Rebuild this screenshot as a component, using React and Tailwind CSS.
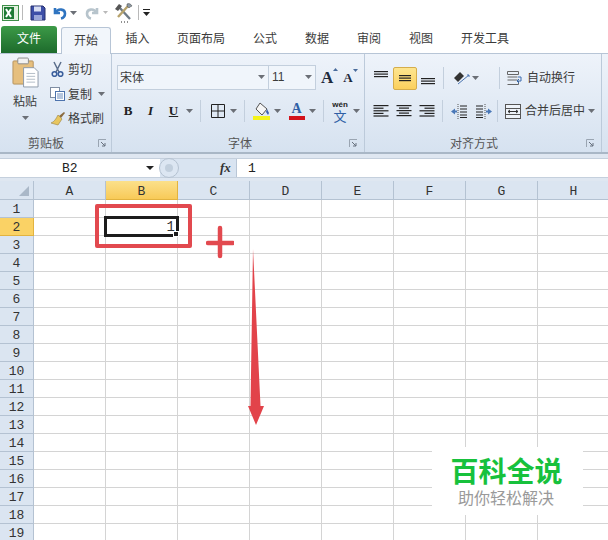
const cjk = { fontFamily: '"Noto Sans CJK SC", "Liberation Sans", sans-serif' };
const cols = ["A", "B", "C", "D", "E", "F", "G", "H"];
const rows = Array.from({ length: 19 }, (_, i) => i + 1);
const tabs = [
  ["插入", "w-[53px]"],
  ["页面布局", "w-[74px]"],
  ["公式", "w-[54px]"],
  ["数据", "w-[50px]"],
  ["审阅", "w-[54px]"],
  ["视图", "w-[50px]"],
  ["开发工具", "w-[78px]"],
];

function Caret({ className = "" }) {
  return (
    <svg width="7" height="4" viewBox="0 0 7 4" className={className}>
      <path d="M0 0h7L3.5 4z" fill="#6b6f76" />
    </svg>
  );
}

function Sep({ className = "" }) {
  return <div className={`w-px h-[22px] bg-[#c3cfdd] shrink-0 ${className}`} />;
}

function Launcher() {
  return (
    <svg width="9" height="9" viewBox="0 0 9 9">
      <path d="M.5 8V.5H8" fill="none" stroke="#9aa5b2" />
      <path d="M3 3l4 4M7 4v3H4" fill="none" stroke="#67717e" />
    </svg>
  );
}

function Lines({ widths, top = 0 }) {
  return (
    <svg width="16" height="14" viewBox="0 0 16 14">
      {widths.map((w, i) => (
        <rect key={i} x={(16 - w) / 2} y={top + i * 2.5} width={w} height="1.2" fill="#222" />
      ))}
    </svg>
  );
}

function LeftLines({ right }) {
  const w = [15, 10, 15, 10, 15];
  return (
    <svg width="16" height="14" viewBox="0 0 16 14">
      {w.map((v, i) => (
        <rect key={i} x={right ? 15.5 - v : 0.5} y={1 + i * 2.6} width={v} height="1.2" fill="#222" />
      ))}
    </svg>
  );
}

function Indent({ flip }) {
  return (
    <svg width="16" height="15" viewBox="0 0 16 15" style={flip ? { transform: "scaleX(-1)" } : undefined}>
      <path d="M7 0v15" stroke="#555" strokeDasharray="1 1" />
      <path d="M9 2h7M9 5h7M9 8h7M9 11h7M9 13.5h7" stroke="#222" />
      <path d="M0 7.5l4-3v2h2v2H4v2z" fill="#4a78b8" />
    </svg>
  );
}

export default function App() {
  return (
    <div className="w-[608px] h-[540px] overflow-hidden relative bg-white text-[#3b3b3b]" style={cjk}>
      {/* quick access */}
      <div className="h-[25px] flex items-center pl-[1px] bg-white">
        <svg width="20" height="20" viewBox="0 0 20 20">
          <rect x="1.5" y="2.5" width="16" height="15" fill="#e3f0df" stroke="#3f8f49" />
          <rect x="3" y="4" width="10" height="12" fill="#1f7a35" />
          <path d="M5 6l5 8M10 6l-5 8" stroke="#fff" strokeWidth="2" />
        </svg>
        <div className="w-px h-[15px] bg-[#b9b9b9] ml-[1px]" />
        <svg width="16" height="16" viewBox="0 0 16 16" className="ml-[7px]">
          <path d="M1 1h12l2 2v12H1z" fill="#3d4fa8" stroke="#27306f" />
          <rect x="4" y="1.5" width="7" height="5" fill="#d8def2" />
          <rect x="4" y="10" width="8" height="5" fill="#9aa6d8" />
        </svg>
        <svg width="14" height="15" viewBox="0 0 14 15" className="ml-[7px]">
          <path d="M2 3v5h5M3 7.5C5 3 12 4 12 8.500c0 2.500-2 4.500-4 5" fill="none" stroke="#2f74c0" strokeWidth="2.600" />
        </svg>
        <Caret className="ml-[3px]" />
        <svg width="14" height="15" viewBox="0 0 14 15" className="ml-[8px]">
          <path d="M12 3v5H7M11 7.500C9 3 2 4 2 8.500c0 2.500 2 4.500 4 5" fill="none" stroke="#b7c4cc" strokeWidth="2.600" />
        </svg>
        <svg width="5" height="3" viewBox="0 0 7 4" className="ml-[4px]">
          <path d="M0 0h7L3.500 4z" fill="#b9b9b9" />
        </svg>
        <svg width="20" height="20" viewBox="0 0 20 20" className="ml-[6px]">
          <path d="M5 4l11 12" stroke="#6f7b86" strokeWidth="2.400" />
          <path d="M14 3L4 14" stroke="#b7a36c" strokeWidth="2.400" />
          <path d="M1 6l4-5 3 2-4 5z" fill="#555" />
          <path d="M13 1c2-1 4 0 5 2l-2 1-1 1-2-2z" fill="#8e9aa5" stroke="#444" strokeWidth=".5" />
          <path d="M7 19h1M10 19h1M13 19h1" stroke="#222" />
        </svg>
        <div className="w-px h-[15px] bg-[#b9b9b9] ml-[4px]" />
        <svg width="7" height="7" viewBox="0 0 7 7" className="ml-[4px]">
          <path d="M0 0h7v1H0z" fill="#222" />
          <path d="M0 3h7L3.500 7z" fill="#222" />
        </svg>
      </div>

      {/* tabs */}
      <div className="h-[28px] flex items-end text-[12px] relative z-10">
        <div className="w-[56px] h-[27px] pb-[3px] ml-[1px] rounded-t-[3px] bg-gradient-to-b from-[#3c9a47] to-[#1d6b2c] text-white flex items-center justify-center">
          文件
        </div>
        <div className="w-[50px] h-[27px] pb-[3px] ml-[4px] -mb-px bg-[#f2f6fb] border border-b-0 border-[#b7c5d6] rounded-t-[3px] flex items-center justify-center">
          开始
        </div>
        {tabs.map(([t, w]) => (
          <div key={t} className={`${w} h-[27px] pb-[3px] shrink-0 flex items-center justify-center`}>
            {t}
          </div>
        ))}
      </div>

      {/* ribbon */}
      <div className="h-[101px] flex bg-gradient-to-b from-[#eef3fa] to-[#d6e2f0] border-t border-b-2 border-t-[#b7c5d6] border-b-[#a9b7c6] text-[12px]">
        {/* clipboard */}
        <div className="w-[112px] shrink-0 border-r border-[#bccada] flex flex-col">
          <div className="h-[81px] flex">
            <div className="w-[48px] flex flex-col items-center pt-[3px] pl-[2px] shrink-0">
              <svg width="27" height="31" viewBox="0 0 28 32">
                <rect x="1" y="4" width="21" height="24" rx="1" fill="#e6bf7e" stroke="#b4925c" />
                <rect x="6" y="1" width="11" height="6" rx="1" fill="#f2f2f2" stroke="#8a8a8a" />
                <path d="M12 11h11l4 4v16H12z" fill="#fff" stroke="#8d99a8" />
                <path d="M15 17h9M15 20h9M15 23h9M15 26h9" stroke="#b3bcc7" />
              </svg>
              <div className="mt-[4px] leading-[18px]">粘贴</div>
              <Caret className="mt-[6px]" />
            </div>
            <div className="flex flex-col pt-[2px] pl-[2px]">
              <div className="h-[25px] flex items-center gap-[3px]">
                <svg width="15" height="16" viewBox="0 0 15 16">
                  <path d="M4 1l5 10M11 1L6 11" stroke="#5b6e8c" strokeWidth="1.500" />
                  <circle cx="4.500" cy="13" r="2.300" fill="none" stroke="#3a5e9c" strokeWidth="1.600" />
                  <circle cx="10.500" cy="13" r="2.300" fill="none" stroke="#3a5e9c" strokeWidth="1.600" />
                </svg>
                剪切
              </div>
              <div className="h-[25px] flex items-center gap-[3px]">
                <svg width="15" height="15" viewBox="0 0 15 15">
                  <rect x=".5" y="1.500" width="9" height="10" fill="#fff" stroke="#7f8da3" />
                  <rect x="5.500" y="5.500" width="9" height="9" fill="#fff" stroke="#4d73ad" />
                  <path d="M7 8h6M7 10h6M7 12h6" stroke="#6c8dbd" />
                </svg>
                复制
                <Caret className="ml-[3px]" />
              </div>
              <div className="h-[24px] flex items-center gap-[3px]">
                <svg width="15" height="15" viewBox="0 0 15 15">
                  <path d="M9 5l5-4 1 1-4 5z" fill="#8b6b3e" />
                  <path d="M8 4l4 4-4 6-7-2c3-1 5-4 7-8z" fill="#e8c65f" stroke="#9a8140" strokeWidth=".6" />
                </svg>
                格式刷
              </div>
            </div>
          </div>
          <div className="flex-1 flex items-center pl-[28px] pr-[4px] justify-between text-[#555]">
            <span>剪贴板</span>
            <Launcher />
          </div>
        </div>

        {/* font */}
        <div className="w-[253px] shrink-0 border-r border-[#bccada] flex flex-col">
          <div className="h-[81px] pl-[5px] pt-[11px]">
            <div className="flex items-center">
              <div className="w-[152px] h-[25px] pb-[2px] flex items-center justify-between bg-[#f0f5fb] border border-[#c3cfdd] pl-[2px] pr-[3px]">
                <span>宋体</span>
                <Caret />
              </div>
              <div className="w-[47px] h-[25px] pb-[2px] flex items-center justify-between bg-[#f0f5fb] border border-l-0 border-[#c3cfdd] pl-[3px] pr-[3px]">
                <span style={{ fontFamily: '"Liberation Sans", sans-serif' }}>11</span>
                <Caret />
              </div>
              <span className="ml-[5px] relative text-[17px] font-bold leading-none text-[#1e2a3c]" style={{ fontFamily: '"Liberation Serif", serif' }}>
                A
                <svg width="5" height="3" viewBox="0 0 5 3" className="absolute -top-[1px] -right-[5px]">
                  <path d="M0 3l2.500-3L5 3z" fill="#4a6c9c" />
                </svg>
              </span>
              <span className="ml-[10px] relative text-[13px] font-bold leading-none text-[#1e2a3c]" style={{ fontFamily: '"Liberation Serif", serif' }}>
                A
                <svg width="5" height="3" viewBox="0 0 5 3" className="absolute -top-[2px] -right-[5px]">
                  <path d="M0 0l2.500 3L5 0z" fill="#4a6c9c" />
                </svg>
              </span>
            </div>
            <div className="flex items-center mt-[9px] h-[24px]">
              <span className="w-[22px] text-center font-bold text-[13px] text-[#222]" style={{ fontFamily: '"Liberation Serif", serif' }}>B</span>
              <span className="w-[23px] text-center italic font-bold text-[13px] text-[#222]" style={{ fontFamily: '"Liberation Serif", serif' }}>I</span>
              <span className="w-[23px] text-center font-bold underline text-[13px] text-[#222]" style={{ fontFamily: '"Liberation Serif", serif' }}>U</span>
              <Caret className="ml-[1px]" />
              <Sep className="ml-[7px]" />
              <svg width="14" height="14" viewBox="0 0 14 14" className="ml-[10px]">
                <path d="M.5.500h13v13H.500zM7 .500v13M.500 7h13" fill="none" stroke="#222" />
              </svg>
              <Caret className="ml-[5px]" />
              <Sep className="ml-[7px]" />
              <svg width="17" height="18" viewBox="0 0 17 18" className="ml-[8px]">
                <path d="M7 1l7 6-5 6-6-6z" fill="#f6f6f6" stroke="#555" />
                <path d="M14 7l2 4-1 2-2-3z" fill="#3a5fb0" />
                <rect y="14" width="17" height="4" fill="#f4f41c" />
              </svg>
              <Caret className="ml-[4px]" />
              <div className="ml-[7px] w-[17px] flex flex-col items-center">
                <span className="font-bold text-[14px] leading-[14px] text-[#2f5fa5]" style={{ fontFamily: '"Liberation Serif", serif' }}>A</span>
                <div className="w-[16px] h-[4px] bg-[#d3121b]" />
              </div>
              <Caret className="ml-[4px]" />
              <Sep className="ml-[7px]" />
              <div className="ml-[8px] w-[16px] flex flex-col items-center text-[#2f5fa5]">
                <span className="text-[8px] leading-[9px] font-bold text-[#222]" style={{ fontFamily: '"Liberation Sans", sans-serif' }}>wén</span>
                <span className="text-[13px] leading-[13px]">文</span>
              </div>
              <Caret className="ml-[5px]" />
            </div>
          </div>
          <div className="flex-1 flex items-center pl-[116px] pr-[6px] justify-between text-[#555]">
            <span>字体</span>
            <Launcher />
          </div>
        </div>

        {/* alignment */}
        <div className="w-[237px] shrink-0 border-r border-[#bccada] flex flex-col">
          <div className="h-[81px] pl-[8px] pt-[12px]">
            <div className="flex items-center h-[24px]">
              <div className="w-[16px] flex"><Lines widths={[14, 14, 14]} /></div>
              <div className="ml-[4px] w-[24px] h-[23px] rounded-[2px] bg-gradient-to-b from-[#fde58f] to-[#fbd05c] border border-[#d5ad4c] flex items-center justify-center">
                <Lines widths={[12, 12, 12]} top={4} />
              </div>
              <div className="ml-[3px] w-[16px] flex"><Lines widths={[14, 14, 14]} top={7} /></div>
              <Sep className="ml-[7px]" />
              <svg width="18" height="15" viewBox="0 0 18 15" className="ml-[9px]">
                <path d="M1 7l6-6 4 4-6 6z" fill="#333" />
                <path d="M5 13l11-9M14 4h2v2" fill="none" stroke="#4a74b0" />
              </svg>
              <Caret className="ml-[1px]" />
              <Sep className="ml-[20px]" />
              <svg width="16" height="15" viewBox="0 0 16 15" className="ml-[7px]">
                <path d="M.5.500h11v3H.500zM.500 6h10M.500 9h10M.500 13.500h11V10" fill="none" stroke="#666" />
                <path d="M11 6h3v4h-4M12 8l-2 2 2 2" fill="none" stroke="#3a6bae" />
              </svg>
              <span className="ml-[4px] pb-[3px]">自动换行</span>
            </div>
            <div className="flex items-center h-[24px] mt-[9px]">
              <LeftLines />
              <div className="ml-[7px] w-[16px]"><Lines widths={[15, 10, 15, 10, 15]} top={1} /></div>
              <div className="ml-[7px]"><LeftLines right /></div>
              <Sep className="ml-[7px]" />
              <div className="ml-[8px]"><Indent /></div>
              <div className="ml-[9px]"><Indent flip /></div>
              <Sep className="ml-[5px]" />
              <svg width="16" height="15" viewBox="0 0 16 15" className="ml-[7px]">
                <rect x=".5" y=".500" width="15" height="14" fill="#eef3f9" stroke="#555" />
                <path d="M.5 4.500h15M.500 10.500h15" stroke="#555" />
                <path d="M3 7.500h10M5 6l-2 1.500L5 9M11 6l2 1.500L11 9" fill="none" stroke="#333" />
              </svg>
              <span className="ml-[4px] pb-[2px]">合并后居中</span>
              <Caret className="ml-[3px]" />
            </div>
          </div>
          <div className="flex-1 flex items-center pl-[85px] pr-[6px] justify-between text-[#555]">
            <span>对齐方式</span>
            <Launcher />
          </div>
        </div>
        <div className="flex-1" />
      </div>

      {/* formula bar */}
      <div className="h-[27px] bg-[#dfe7f1] pt-[4px]">
        <div className="h-[20px] flex items-center bg-white border-y border-[#c5d0dd] text-[13px] text-[#222]" style={{ fontFamily: '"Liberation Mono", monospace' }}>
          <div className="w-[160px] shrink-0 flex items-center pl-[62px] pr-[6px] justify-between">
            <span className="pt-[2px]">B2</span>
            <svg width="8" height="4" viewBox="0 0 8 4">
              <path d="M0 0h8L4 4z" fill="#222" />
            </svg>
          </div>
          <div className="w-[77px] h-full shrink-0 flex items-center bg-[#d9e4f1] border-r border-[#b9c6d6]">
            <div className="w-[20px] h-[20px] rounded-full bg-[#dce6f2] border border-[#b5c2d1] -ml-[1px] flex items-center justify-center">
              <div className="w-[8px] h-[8px] rounded-full bg-[#c2cfdd]" />
            </div>
            <span className="ml-[41px] italic font-bold text-[13px] text-[#333]" style={{ fontFamily: '"Liberation Serif", serif' }}>fx</span>
          </div>
          <span className="ml-[11px] pt-[2px]">1</span>
        </div>
      </div>

      {/* sheet */}
      <div className="text-[13px] text-[#333]" style={{ fontFamily: '"Liberation Mono", monospace' }}>
        <div className="flex h-[19px]">
          <div className="w-[34px] shrink-0 bg-[#dbe5f1] border-r border-b border-[#b4c2d2] relative">
            <svg width="10" height="10" viewBox="0 0 10 10" className="absolute right-[4px] bottom-[3px]">
              <path d="M10 0v10H0z" fill="#aab8c8" />
            </svg>
          </div>
          {cols.map((c) => (
            <div
              key={c}
              className={
                c === "B"
                  ? "w-[72px] shrink-0 pt-[3px] flex items-center justify-center border-r border-b border-[#e2b33f] bg-gradient-to-b from-[#fbe08a] to-[#f8ca57]"
                  : "w-[72px] shrink-0 pt-[3px] flex items-center justify-center border-r border-b border-[#b4c2d2] bg-[#dbe5f1]"
              }
            >
              {c}
            </div>
          ))}
        </div>
        {rows.map((r) => (
          <div key={r} className="flex h-[18px]">
            <div
              className={
                r === 2
                  ? "w-[34px] shrink-0 pt-[3px] flex items-center justify-center border-r border-b border-[#e2b33f] bg-[#fad265]"
                  : "w-[34px] shrink-0 pt-[3px] flex items-center justify-center border-r border-b border-[#b4c2d2] bg-[#dbe5f1]"
              }
            >
              {r}
            </div>
            {cols.map((c) => (
              <div key={c} className="w-[72px] shrink-0 border-r border-b border-[#d4d4d4]" />
            ))}
          </div>
        ))}
      </div>

      {/* selected cell and annotations on top of the sheet */}
      <div className="absolute left-[104px] top-[216px] w-[75px] h-[21px] border-[3px] border-[#1c1c1c] flex items-center justify-end pr-[1px] pt-[2px] text-[14px] text-[#333]" style={{ fontFamily: '"Liberation Mono", monospace' }}>
        1
        <div className="absolute -right-[3px] -bottom-[3px] w-[6px] h-[6px] bg-[#1c1c1c] border border-white" />
      </div>
      <div className="absolute left-[95px] top-[204px] w-[97px] h-[44px] border-[4px] border-[#e2494f] rounded-[2px]" />
      <svg width="28" height="34" viewBox="0 0 28 34" className="absolute left-[206px] top-[225px]">
        <path d="M14 3v28M2 18h25" stroke="#e2494f" strokeWidth="4.500" strokeLinecap="round" />
      </svg>
      <svg width="18" height="178" viewBox="0 0 18 178" className="absolute left-[247px] top-[248px]">
        <path d="M6 1L13.500 158 17 158 9 177 1 158 3.500 158z" fill="#e2434a" />
      </svg>

      {/* watermark */}
      <div className="absolute left-[432px] top-[447px] w-[151px] h-[68px] bg-white flex flex-col items-center pt-[6px]">
        <div className="text-[28px] leading-[34px] font-bold text-[#17c13c] -ml-[2px]">百科全说</div>
        <div className="text-[16px] leading-[20px] text-[#9a9a9a] -ml-[3px]">助你轻松解决</div>
      </div>
    </div>
  );
}
